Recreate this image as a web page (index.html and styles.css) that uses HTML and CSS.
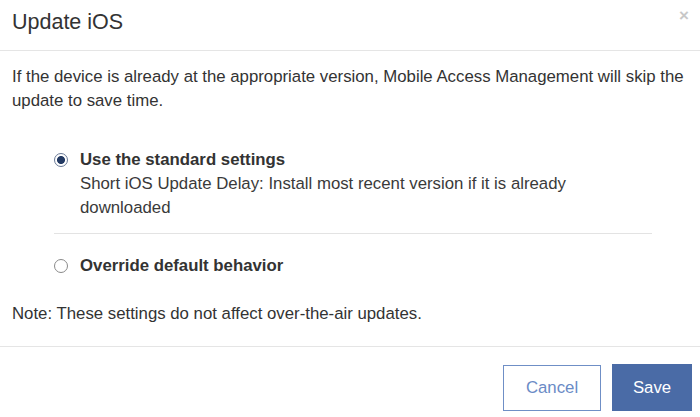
FILE: index.html
```html
<!DOCTYPE html>
<html lang="en">
<head>
  <meta charset="UTF-8" />
  <title>Update iOS</title>
  <link rel="stylesheet" href="styles.css">
</head>
<body>
  <div class="dialog">
    <div class="dialog-header">
      <h3>Update iOS</h3>
      <button class="close" aria-label="Close">&times;</button>
    </div>

    <div class="dialog-body">
      <p class="intro">If the device is already at the appropriate version, Mobile Access Management will skip the update to save time.</p>

      <div class="options">
        <div class="option first">
          <label class="option-label"><input type="radio" name="behavior" checked> Use the standard settings</label>
          <p class="option-desc">Short iOS Update Delay: Install most recent version if it is already downloaded</p>
        </div>
        <div class="option">
          <label class="option-label"><input type="radio" name="behavior"> Override default behavior</label>
        </div>
      </div>

      <p class="note">Note: These settings do not affect over-the-air updates.</p>
    </div>

    <div class="dialog-footer">
      <button class="btn btn-cancel">Cancel</button>
      <button class="btn btn-save">Save</button>
    </div>
  </div>
</body>
</html>
```

FILE: styles.css
```css
body {
  margin: 0;
  font-family: 'Liberation Sans', Arial, sans-serif;
  font-size: 16.8px;
  color: #333;
  background-color: #fff;
}

.dialog {
  width: 700px;
}

.dialog-header {
  height: 51px;
  display: flex;
  align-items: center;
  justify-content: space-between;
  padding: 0 12px;
  border-bottom: 1px solid #e5e5e5;
  box-sizing: border-box;
}

.dialog-header h3 {
  margin: 0;
  font-size: 21.5px;
  font-weight: normal;
  color: #333;
  padding-bottom: 6px;
}

.close {
  border: none;
  background: none;
  color: #c8c8c8;
  font-family: 'Liberation Sans', Arial, sans-serif;
  font-size: 17px;
  font-weight: bold;
  padding: 0;
  margin-top: -18px;
  margin-right: -1px;
  cursor: pointer;
}

.dialog-body {
  padding: 14px 12px 20px;
}

p {
  margin: 0;
  line-height: 24px;
}

.options {
  margin: 35px 36px 24px 42px;
}

.option {
  padding: 20px 0 0;
}

.option.first {
  padding: 0 0 13px;
  border-bottom: 1px solid #e3e3e3;
}

.option-label {
  display: flex;
  align-items: center;
  gap: 12px;
  font-weight: bold;
  line-height: 24px;
}

.option-desc {
  padding-left: 26px;
  padding-right: 20px;
  color: #3a3a3a;
}

input[type="radio"] {
  appearance: none;
  -webkit-appearance: none;
  margin: 0;
  width: 14px;
  height: 14px;
  border: 1px solid #8a8a8a;
  border-radius: 50%;
  background: #fff;
  box-sizing: border-box;
  flex-shrink: 0;
}

input[type="radio"]:checked {
  border-color: #6a7a96;
  background: radial-gradient(circle, #233a63 0 3.6px, #fff 4.4px);
}

.dialog-footer {
  border-top: 1px solid #e5e5e5;
  display: flex;
  justify-content: flex-end;
  align-items: center;
  gap: 11px;
  padding: 17px 8px 6px;
}

.btn {
  font-family: 'Liberation Sans', Arial, sans-serif;
  font-size: 16.8px;
  height: 46px;
  cursor: pointer;
}

.btn-cancel {
  width: 98px;
  background: #fff;
  color: #6b8bc6;
  border: 1px solid #6f8fc6;
}

.btn-save {
  width: 80px;
  height: 47px;
  background-color: #4a6ba6;
  color: #fff;
  border: none;
}
```
